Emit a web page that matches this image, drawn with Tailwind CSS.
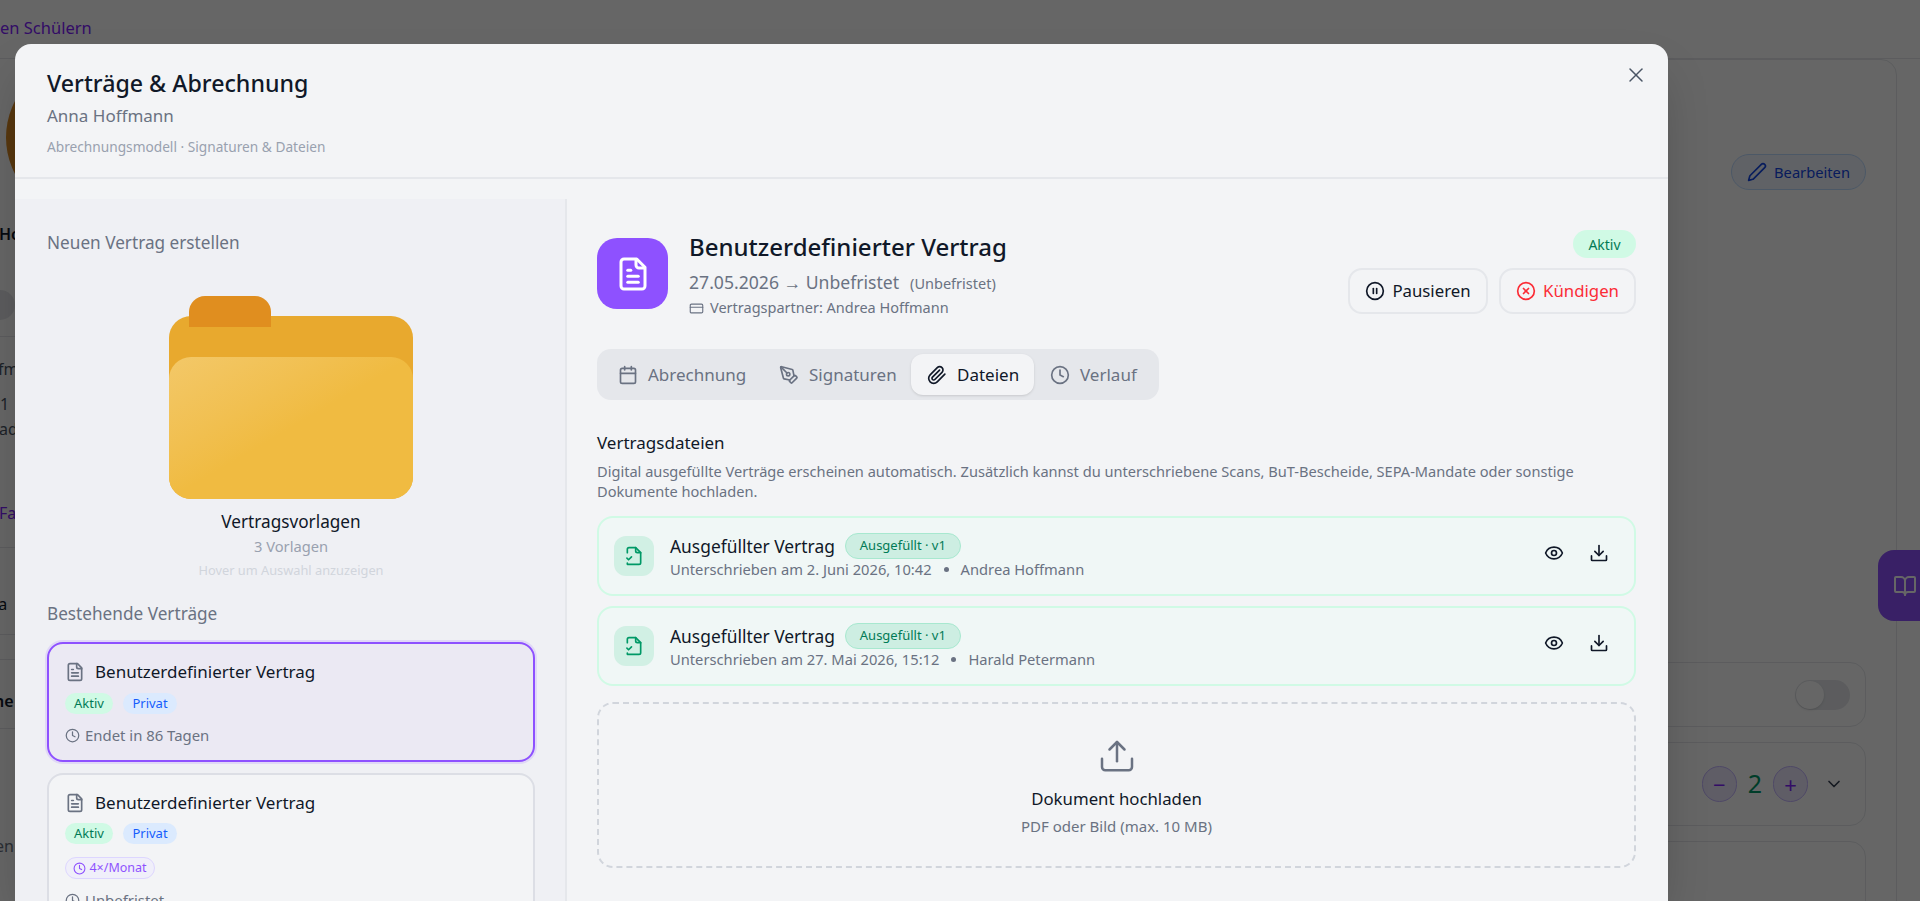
<!DOCTYPE html>
<html lang="de">

<head>
  <meta charset="UTF-8">
  <title>Verträge &amp; Abrechnung</title>
  <script src="https://cdn.jsdelivr.net/npm/@tailwindcss/browser@4"></script>
</head>

<body class="relative h-[901px] overflow-hidden bg-white font-['Noto_Sans',sans-serif] text-gray-900">

  <!-- Page behind the dialog -->
  <div class="h-[59px] border-b border-gray-200 pt-[16px] text-[16.5px] leading-6 text-violet-600">en Schülern</div>
  <div class="flex h-[842px] items-start overflow-hidden">
    <!-- what shows of the left column -->
    <div class="h-[842px] w-[15px] shrink-0 overflow-hidden whitespace-nowrap text-[16px]">
      <div class="ml-[6px] size-[157px] rounded-full bg-[#d98a24]"></div>
      <div class="mt-[6px] -ml-[1px] h-[24px] font-semibold leading-6">Ho</div>
      <div class="mt-[44px] h-[30px] w-[15px] rounded-r-full bg-gray-200"></div>
      <div class="mt-[16px] border-t border-gray-200"></div>
      <div class="mt-[20px] h-[24px] -ml-[2px] leading-6 text-gray-600">fm</div>
      <div class="mt-[11px] h-[24px] leading-6 text-gray-600">1</div>
      <div class="mt-[1px] h-[24px] -ml-[1px] leading-6 text-gray-600">ad</div>
      <div class="mt-[60px] h-[24px] -ml-[1px] leading-6 text-violet-600">Fa</div>
      <div class="mt-[22px] border-t border-gray-200"></div>
      <div class="mt-[44px] h-[24px] -ml-[6px] leading-6">Ja</div>
      <div class="mt-[18px] border-t border-gray-200"></div>
      <div class="mt-[24px] border-t border-gray-200"></div>
      <div class="mt-[29px] h-[24px] -ml-[6px] font-semibold leading-6">ne</div>
      <div class="mt-[15px] border-t border-gray-200"></div>
      <div class="mt-[105px] h-[24px] -ml-[5px] leading-6 text-gray-500">en</div>
    </div>

    <!-- what shows of the right card -->
    <div class="mr-[23px] flex h-[900px] flex-1 flex-col items-end rounded-2xl border border-gray-200 pr-[30px]">
      <button class="mt-[94px] flex h-[36px] w-[135px] shrink-0 items-center justify-center gap-[7px] rounded-full border border-blue-200 bg-blue-50 text-[14.7px] text-blue-700">
        <svg class="size-5" viewBox="0 0 24 24" fill="none" stroke="currentColor" stroke-width="2" stroke-linecap="round" stroke-linejoin="round">
          <path d="M21.2 6.8a2.8 2.8 0 0 0-4-4L3.8 16.2a2 2 0 0 0-.5.9L2 22l4.9-1.3a2 2 0 0 0 .9-.5z" />
        </svg>
        Bearbeiten
      </button>
      <div class="mt-[472px] flex h-[65px] w-[400px] shrink-0 items-center justify-end rounded-2xl border border-gray-200 pr-[15px]">
        <div class="h-[30px] w-[55px] rounded-full bg-gray-200 p-[1px]">
          <div class="size-[28px] rounded-full bg-white shadow"></div>
        </div>
      </div>
      <div class="mt-[15px] flex h-[84px] w-[400px] shrink-0 items-center justify-end gap-[10px] rounded-2xl border border-gray-200 pr-[21px]">
        <div class="flex h-[36px] w-[35px] items-center justify-center rounded-full border border-violet-300 bg-violet-100 text-[22px] text-violet-600">−</div>
        <div class="mx-[1px] text-[25px] font-normal text-emerald-600">2</div>
        <div class="flex h-[36px] w-[35px] items-center justify-center rounded-full border border-violet-300 bg-violet-100 text-[22px] text-violet-600">+</div>
        <svg class="ml-[6px] size-5 text-gray-700" viewBox="0 0 24 24" fill="none" stroke="currentColor" stroke-width="2" stroke-linecap="round" stroke-linejoin="round">
          <path d="m6 9 6 6 6-6" />
        </svg>
      </div>
      <div class="mt-[15px] h-[120px] w-[400px] shrink-0 rounded-2xl border border-gray-200"></div>
    </div>
  </div>

  <!-- floating help tab -->
  <div class="absolute right-0 top-[550px] flex h-[71px] w-[42px] items-center rounded-l-2xl bg-violet-500 pl-[15px] text-white">
    <svg class="size-[24px]" viewBox="0 0 24 24" fill="none" stroke="currentColor" stroke-width="2" stroke-linecap="round" stroke-linejoin="round">
      <path d="M12 7v14" />
      <path d="M3 18a1 1 0 0 1-1-1V4a1 1 0 0 1 1-1h5a4 4 0 0 1 4 4 4 4 0 0 1 4-4h5a1 1 0 0 1 1 1v13a1 1 0 0 1-1 1h-6a3 3 0 0 0-3 3 3 3 0 0 0-3-3z" />
    </svg>
  </div>

  <!-- Backdrop -->
  <div class="absolute inset-0 bg-black/60"></div>

  <!-- Dialog -->
  <div class="absolute left-[15px] top-[44px] flex h-[857px] w-[1653px] flex-col overflow-hidden rounded-t-2xl bg-gray-100 shadow-2xl">
    <button class="absolute right-[20px] top-[19px] text-gray-600">
      <svg class="size-6" viewBox="0 0 24 24" fill="none" stroke="currentColor" stroke-width="1.5" stroke-linecap="round" stroke-linejoin="round">
        <path d="M18 6 6 18" />
        <path d="m6 6 12 12" />
      </svg>
    </button>

    <!-- Header -->
    <div class="h-[135px] shrink-0 border-b-2 border-gray-200 px-[32px] pt-[23px]">
      <h1 class="text-[23.2px] font-medium leading-8 text-gray-900">Verträge &amp; Abrechnung</h1>
      <p class="mt-[5px] text-[17px] leading-6 text-gray-500">Anna Hoffmann</p>
      <p class="mt-[9px] text-[13.7px] leading-5 text-gray-400">Abrechnungsmodell · Signaturen &amp; Dateien</p>
    </div>

    <div class="mt-[20px] flex h-[702px] shrink-0">
      <!-- Left column -->
      <div class="w-[552px] shrink-0 overflow-hidden border-r-2 border-gray-200 bg-[#eff0f4] pl-[32px] pr-[30px] pt-[32px]">
        <h2 class="text-[17.2px] leading-6 text-gray-500">Neuen Vertrag erstellen</h2>

        <!-- Folder -->
        <div class="relative mx-auto mt-[41px] h-[203px] w-[244px]">
          <div class="absolute inset-x-0 bottom-0 top-[20px] rounded-[22px] bg-[#e8a92e]"></div>
          <div class="absolute left-[20px] top-0 h-[31px] w-[82px] rounded-t-[16px] bg-[#e08e1f]"></div>
          <div class="absolute inset-x-0 bottom-0 top-[61px] rounded-[22px] bg-linear-to-br from-[#f3c868] via-[#f0bb41] to-[#f0bb41]"></div>
        </div>

        <div class="mt-[9px] text-center">
          <div class="text-[17.2px] leading-7 text-gray-900">Vertragsvorlagen</div>
          <div class="text-[14.7px] leading-5 text-gray-400">3 Vorlagen</div>
          <div class="mt-[6px] text-[12.8px] leading-4 text-gray-300">Hover um Auswahl anzuzeigen</div>
        </div>

        <h2 class="mt-[24px] text-[17.2px] leading-6 text-gray-500">Bestehende Verträge</h2>

        <div class="mt-[16px] flex flex-col gap-[11px]">
          <!-- Selected contract -->
          <div class="h-[120px] shrink-0 rounded-2xl border-2 border-violet-500 bg-[#ebe9f3] px-4 pt-[14px] ring-2 ring-violet-500/15">
            <div class="flex h-7 items-center gap-[10px] text-[17px]">
              <svg class="size-5 text-gray-500" viewBox="0 0 24 24" fill="none" stroke="currentColor" stroke-width="2" stroke-linecap="round" stroke-linejoin="round">
                <path d="M15 2H6a2 2 0 0 0-2 2v16a2 2 0 0 0 2 2h12a2 2 0 0 0 2-2V7Z" />
                <path d="M14 2v4a2 2 0 0 0 2 2h4" />
                <path d="M10 9H8" />
                <path d="M16 13H8" />
                <path d="M16 17H8" />
              </svg>
              Benutzerdefinierter Vertrag
            </div>
            <div class="mt-[7px] flex gap-[10px] text-[13px]">
              <span class="flex h-[21px] w-[48px] items-center justify-center rounded-full bg-emerald-100 text-emerald-700">Aktiv</span>
              <span class="flex h-[21px] w-[54px] items-center justify-center rounded-full bg-blue-100 text-blue-600">Privat</span>
            </div>
            <div class="mt-[11px] flex h-5 items-center gap-[5px] text-[14.9px] text-gray-500">
              <svg class="size-[15px]" viewBox="0 0 24 24" fill="none" stroke="currentColor" stroke-width="2" stroke-linecap="round" stroke-linejoin="round">
                <circle cx="12" cy="12" r="10" />
                <path d="M12 6v6l4 2" />
              </svg>
              Endet in 86 Tagen
            </div>
          </div>

          <!-- Other contract -->
          <div class="h-[170px] shrink-0 rounded-2xl border-2 border-[#dcdee5] bg-gray-100 px-4 pt-[14px]">
            <div class="flex h-7 items-center gap-[10px] text-[17px]">
              <svg class="size-5 text-gray-500" viewBox="0 0 24 24" fill="none" stroke="currentColor" stroke-width="2" stroke-linecap="round" stroke-linejoin="round">
                <path d="M15 2H6a2 2 0 0 0-2 2v16a2 2 0 0 0 2 2h12a2 2 0 0 0 2-2V7Z" />
                <path d="M14 2v4a2 2 0 0 0 2 2h4" />
                <path d="M10 9H8" />
                <path d="M16 13H8" />
                <path d="M16 17H8" />
              </svg>
              Benutzerdefinierter Vertrag
            </div>
            <div class="mt-[6px] flex gap-[10px] text-[13px]">
              <span class="flex h-[21px] w-[48px] items-center justify-center rounded-full bg-emerald-100 text-emerald-700">Aktiv</span>
              <span class="flex h-[21px] w-[54px] items-center justify-center rounded-full bg-blue-100 text-blue-600">Privat</span>
            </div>
            <div class="mt-[13px] flex h-[22px] w-[90px] items-center justify-center gap-[3px] rounded-full border border-violet-200 bg-violet-100/50 text-[12.5px] text-violet-500">
              <svg class="size-[13px]" viewBox="0 0 24 24" fill="none" stroke="currentColor" stroke-width="2" stroke-linecap="round" stroke-linejoin="round">
                <circle cx="12" cy="12" r="10" />
                <path d="M12 6v6l4 2" />
              </svg>
              4×/Monat
            </div>
            <div class="mt-[11px] flex h-5 items-center gap-[5px] text-[14.9px] text-gray-500">
              <svg class="size-[15px]" viewBox="0 0 24 24" fill="none" stroke="currentColor" stroke-width="2" stroke-linecap="round" stroke-linejoin="round">
                <circle cx="12" cy="12" r="10" />
                <path d="M12 6v6l4 2" />
              </svg>
              Unbefristet
            </div>
          </div>
        </div>
      </div>

      <!-- Right column -->
      <div class="flex-1 pl-[30px] pr-[32px] pt-[31px]">
        <div class="flex h-[88px] justify-between">
          <div class="flex gap-[21px]">
            <div class="mt-[8px] flex size-[71px] items-center justify-center rounded-[20px] bg-violet-500 text-white">
              <svg class="size-[36px]" viewBox="0 0 24 24" fill="none" stroke="currentColor" stroke-width="2" stroke-linecap="round" stroke-linejoin="round">
                <path d="M14.5 2H6a2 2 0 0 0-2 2v16a2 2 0 0 0 2 2h12a2 2 0 0 0 2-2V7.500Z" />
                <path d="M14 2.500V6a2 2 0 0 0 2 2h3.500" />
                <path d="M8.500 9.500h2" />
                <path d="M8.500 13.500h7" />
                <path d="M8.500 17.500h7" />
              </svg>
            </div>
            <div class="pt-[1px]">
              <div class="text-[24px] font-medium leading-8">Benutzerdefinierter Vertrag</div>
              <div class="mt-[5px] flex h-7 items-baseline gap-[11px] leading-7 text-gray-500">
                <span class="text-[17.600px]">27.05.2026 → Unbefristet</span>
                <span class="text-[14.500px]">(Unbefristet)</span>
              </div>
              <div class="mt-[2px] flex h-5 items-center gap-[6px] text-[14.500px] text-gray-500">
                <svg class="size-[15px]" viewBox="0 0 24 24" fill="none" stroke="currentColor" stroke-width="1.8" stroke-linecap="round" stroke-linejoin="round">
                  <rect width="20" height="14" x="2" y="5" rx="2" />
                  <path d="M2 10h20" />
                </svg>
                Vertragspartner: Andrea Hoffmann
              </div>
            </div>
          </div>

          <div class="flex flex-col items-end">
            <span class="flex h-[28px] w-[63px] items-center justify-center rounded-full bg-emerald-100 text-[14px] text-emerald-700">Aktiv</span>
            <div class="mt-[10px] flex gap-[11px] text-[16.800px]">
              <button class="flex h-[46px] w-[140px] items-center justify-center gap-[7px] rounded-[14px] border-2 border-gray-200">
                <svg class="size-5" viewBox="0 0 24 24" fill="none" stroke="currentColor" stroke-width="2" stroke-linecap="round" stroke-linejoin="round">
                  <circle cx="12" cy="12" r="10" />
                  <path d="M10 15V9" />
                  <path d="M14 15V9" />
                </svg>
                Pausieren
              </button>
              <button class="flex h-[46px] w-[137px] items-center justify-center gap-[7px] rounded-[14px] border-2 border-gray-200 text-red-500">
                <svg class="size-5" viewBox="0 0 24 24" fill="none" stroke="currentColor" stroke-width="2" stroke-linecap="round" stroke-linejoin="round">
                  <circle cx="12" cy="12" r="10" />
                  <path d="m15 9-6 6" />
                  <path d="m9 9 6 6" />
                </svg>
                Kündigen
              </button>
            </div>
          </div>
        </div>

        <!-- Tabs -->
        <div class="mt-[31px] inline-flex h-[51px] items-center rounded-[14px] bg-gray-200 p-[5px] text-[17px] text-gray-500">
          <div class="flex h-[41px] w-[161px] items-center gap-[10px] px-4">
            <svg class="size-5 shrink-0" viewBox="0 0 24 24" fill="none" stroke="currentColor" stroke-width="2" stroke-linecap="round" stroke-linejoin="round">
              <path d="M8 2v4" />
              <path d="M16 2v4" />
              <rect width="18" height="18" x="3" y="4" rx="2" />
              <path d="M3 10h18" />
            </svg>
            Abrechnung
          </div>
          <div class="flex h-[41px] w-[148px] items-center gap-[10px] px-4">
            <svg class="size-5 shrink-0" viewBox="0 0 24 24" fill="none" stroke="currentColor" stroke-width="2" stroke-linecap="round" stroke-linejoin="round">
              <path d="M15.707 21.293a1 1 0 0 1-1.414 0l-1.586-1.586a1 1 0 0 1 0-1.414l5.586-5.586a1 1 0 0 1 1.414 0l1.586 1.586a1 1 0 0 1 0 1.414z" />
              <path d="m18 13-1.375-6.874a1 1 0 0 0-.746-.776L3.235 2.028a1 1 0 0 0-1.207 1.207L5.350 15.879a1 1 0 0 0 .776.746L13 18" />
              <path d="m2.300 2.300 7.286 7.286" />
              <circle cx="11" cy="11" r="2" />
            </svg>
            Signaturen
          </div>
          <div class="flex h-[41px] w-[123px] items-center gap-[10px] rounded-[12px] bg-gray-100 px-4 text-gray-900 shadow-sm">
            <svg class="size-5 shrink-0" viewBox="0 0 24 24" fill="none" stroke="currentColor" stroke-width="2" stroke-linecap="round" stroke-linejoin="round">
              <path d="m21.44 11.05-9.19 9.19a6 6 0 0 1-8.49-8.49l8.57-8.57A4 4 0 1 1 18 8.84l-8.59 8.57a2 2 0 0 1-2.83-2.83l8.49-8.48" />
            </svg>
            Dateien
          </div>
          <div class="flex h-[41px] w-[120px] items-center gap-[10px] px-4">
            <svg class="size-5 shrink-0" viewBox="0 0 24 24" fill="none" stroke="currentColor" stroke-width="2" stroke-linecap="round" stroke-linejoin="round">
              <circle cx="12" cy="12" r="10" />
              <path d="M12 6v6l4 2" />
            </svg>
            Verlauf
          </div>
        </div>

        <!-- Files -->
        <h3 class="mt-[31px] text-[17px] leading-6">Vertragsdateien</h3>
        <p class="mt-[6px] text-[14.600px] leading-5 text-gray-500">Digital ausgefüllte Verträge erscheinen automatisch. Zusätzlich kannst du unterschriebene Scans, BuT-Bescheide, SEPA-Mandate oder sonstige<br>Dokumente hochladen.</p>

        <div class="mt-[15px] flex flex-col gap-[10px]">
          <div class="flex h-[80px] items-center rounded-2xl border-2 border-emerald-100 bg-[#f0f7f6] px-[15px]">
            <div class="flex size-[40px] items-center justify-center rounded-xl bg-[#d1f0e4] text-emerald-600">
              <svg class="size-5" viewBox="0 0 24 24" fill="none" stroke="currentColor" stroke-width="2" stroke-linecap="round" stroke-linejoin="round">
                <path d="M4 8V4a2 2 0 0 1 2-2h8l6 6v12a2 2 0 0 1-2 2H4v-1.500" />
                <path d="M14 2v4a2 2 0 0 0 2 2h4" />
                <path d="m3.500 14.500 2 2 3.500-3.500" />
              </svg>
            </div>
            <div class="ml-[16px] flex-1">
              <div class="flex h-[26px] items-center gap-[10px]">
                <span class="text-[17.400px]">Ausgefüllter Vertrag</span>
                <span class="flex h-[26px] w-[116px] items-center justify-center rounded-full border border-[#a7e8cf] bg-[#cdeee2] text-[13px] text-emerald-700">Ausgefüllt · v1</span>
              </div>
              <div class="flex h-5 items-center gap-[12px] text-[14.700px] text-gray-500">
                Unterschrieben am 2. Juni 2026, 10:42
                <span class="size-[5px] rounded-full bg-gray-500"></span>
                Andrea Hoffmann
              </div>
            </div>
            <div class="-mt-[6px] flex gap-[5px]">
              <button class="flex size-10 items-center justify-center">
                <svg class="size-5" viewBox="0 0 24 24" fill="none" stroke="currentColor" stroke-width="2" stroke-linecap="round" stroke-linejoin="round">
                  <path d="M2.062 12.348a1 1 0 0 1 0-.696 10.75 10.75 0 0 1 19.876 0 1 1 0 0 1 0 .696 10.75 10.75 0 0 1-19.876 0" />
                  <circle cx="12" cy="12" r="3" />
                </svg>
              </button>
              <button class="flex size-10 items-center justify-center">
                <svg class="size-5" viewBox="0 0 24 24" fill="none" stroke="currentColor" stroke-width="2" stroke-linecap="round" stroke-linejoin="round">
                  <path d="M12 3v12" />
                  <path d="m7 10 5 5 5-5" />
                  <path d="M3 15.500V20a1 1 0 0 0 1 1h16a1 1 0 0 0 1-1v-4.500" />
                </svg>
              </button>
            </div>
          </div>

          <div class="flex h-[80px] items-center rounded-2xl border-2 border-emerald-100 bg-[#f0f7f6] px-[15px]">
            <div class="flex size-[40px] items-center justify-center rounded-xl bg-[#d1f0e4] text-emerald-600">
              <svg class="size-5" viewBox="0 0 24 24" fill="none" stroke="currentColor" stroke-width="2" stroke-linecap="round" stroke-linejoin="round">
                <path d="M4 8V4a2 2 0 0 1 2-2h8l6 6v12a2 2 0 0 1-2 2H4v-1.500" />
                <path d="M14 2v4a2 2 0 0 0 2 2h4" />
                <path d="m3.500 14.500 2 2 3.500-3.500" />
              </svg>
            </div>
            <div class="ml-[16px] flex-1">
              <div class="flex h-[26px] items-center gap-[10px]">
                <span class="text-[17.400px]">Ausgefüllter Vertrag</span>
                <span class="flex h-[26px] w-[116px] items-center justify-center rounded-full border border-[#a7e8cf] bg-[#cdeee2] text-[13px] text-emerald-700">Ausgefüllt · v1</span>
              </div>
              <div class="flex h-5 items-center gap-[12px] text-[14.700px] text-gray-500">
                Unterschrieben am 27. Mai 2026, 15:12
                <span class="size-[5px] rounded-full bg-gray-500"></span>
                Harald Petermann
              </div>
            </div>
            <div class="-mt-[6px] flex gap-[5px]">
              <button class="flex size-10 items-center justify-center">
                <svg class="size-5" viewBox="0 0 24 24" fill="none" stroke="currentColor" stroke-width="2" stroke-linecap="round" stroke-linejoin="round">
                  <path d="M2.062 12.348a1 1 0 0 1 0-.696 10.75 10.75 0 0 1 19.876 0 1 1 0 0 1 0 .696 10.75 10.75 0 0 1-19.876 0" />
                  <circle cx="12" cy="12" r="3" />
                </svg>
              </button>
              <button class="flex size-10 items-center justify-center">
                <svg class="size-5" viewBox="0 0 24 24" fill="none" stroke="currentColor" stroke-width="2" stroke-linecap="round" stroke-linejoin="round">
                  <path d="M12 3v12" />
                  <path d="m7 10 5 5 5-5" />
                  <path d="M3 15.500V20a1 1 0 0 0 1 1h16a1 1 0 0 0 1-1v-4.500" />
                </svg>
              </button>
            </div>
          </div>
        </div>

        <!-- Upload -->
        <div class="mt-[16px] flex h-[166px] flex-col items-center rounded-2xl border-2 border-dashed border-gray-300 pt-[33px]">
          <svg class="size-[40px] text-gray-500" viewBox="0 0 24 24" fill="none" stroke="currentColor" stroke-width="1.500" stroke-linecap="round" stroke-linejoin="round">
            <path d="M12 14.500V3" />
            <path d="m7.500 7.500 4.500-4.500 4.500 4.500" />
            <path d="M3 13v5a2 2 0 0 0 2 2h14a2 2 0 0 0 2-2v-5" />
          </svg>
          <div class="mt-[10px] text-[16.800px] leading-6">Dokument hochladen</div>
          <div class="mt-[5px] text-[15px] leading-5 text-gray-500">PDF oder Bild (max. 10 MB)</div>
        </div>
      </div>
    </div>
  </div>

</body>

</html>
